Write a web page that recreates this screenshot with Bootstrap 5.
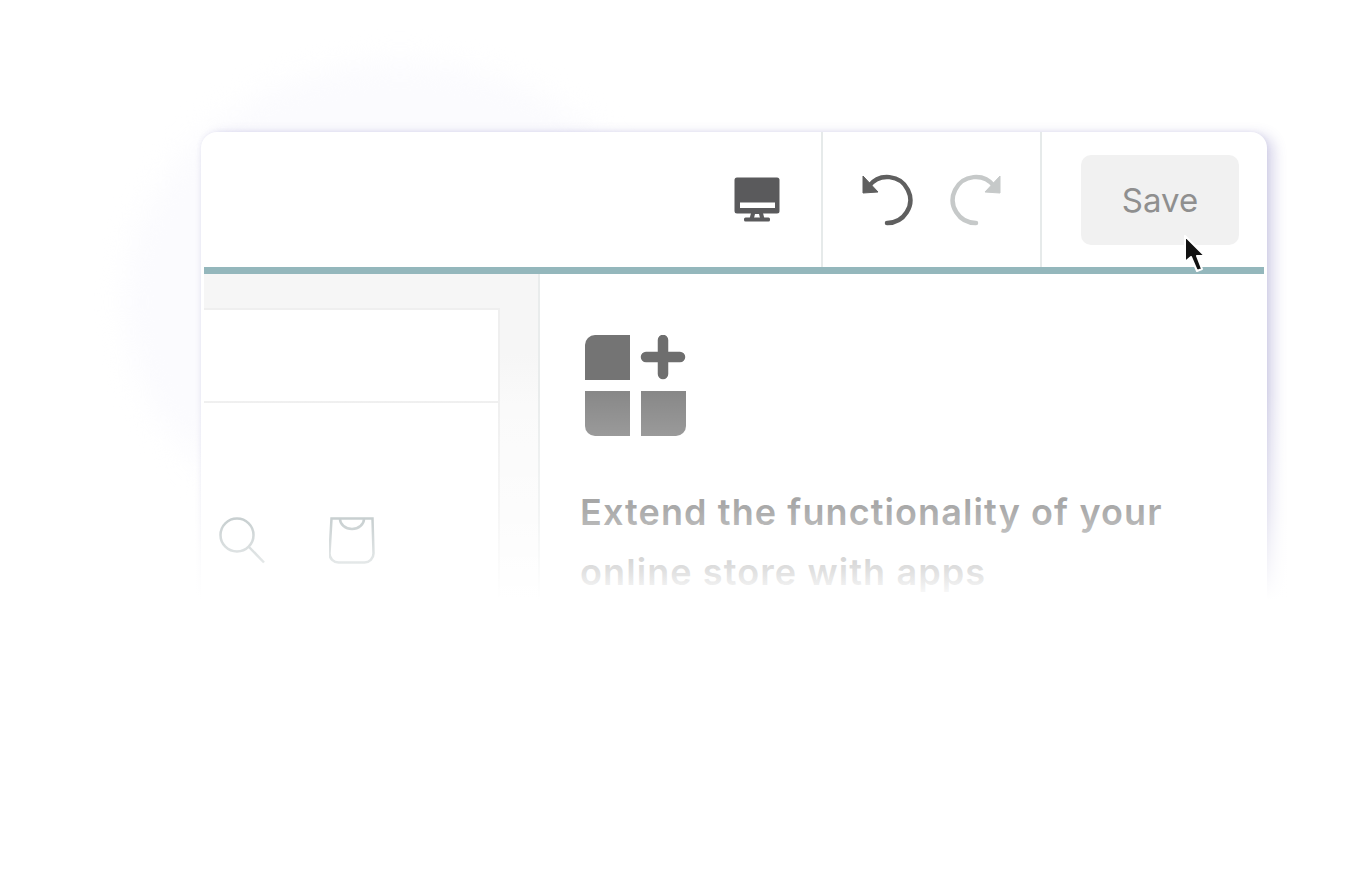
<!DOCTYPE html>
<html lang="en">
<head>
<meta charset="utf-8">
<title>Editor</title>
<link href="https://cdn.jsdelivr.net/npm/bootstrap@5.3.0/dist/css/bootstrap.min.css" rel="stylesheet">
<style>
html,body{height:100%;background:#fff}
body{font-family:Inter,"Liberation Sans",sans-serif;overflow:hidden}
.stage{position:relative;height:891px;padding:132px 100px 0 201px;overflow:hidden}
.glow{position:absolute;left:125px;top:62px;width:550px;height:480px;border-radius:50%;background:#fbfbfe;filter:blur(14px)}
.win{position:relative;width:1066px;height:560px;background:#fff;border-radius:16px;padding:0 3px;box-shadow:7px 3px 13px rgba(92,84,170,.24),0 0 5px rgba(92,84,170,.1)}
.bar{height:135px}
.seg-a{width:617px;padding-right:41px}
.seg-b{width:219px;border-left:2px solid #e6eaea;padding-left:38px;gap:37px}
.seg-c{flex:1;border-left:2px solid #e6eaea;padding-left:39px;padding-top:23px}
.savebtn{width:158px;height:90px;background:#f1f1f1;border:0;border-radius:10px;color:#8f8f8f;font-size:33px;line-height:88px;padding:0;--bs-btn-hover-bg:#f1f1f1}
.rule{height:7px;background:#94b7bc}
.pane{height:418px}
.leftp{width:336px;background:linear-gradient(to bottom,#f6f6f6 80px,#fafafa 130px);border-right:2px solid #e9ecec;padding:34px 38px 0 0}
.sheet{background:#fff;border:solid #efefef;border-width:2px 2px 0 0;height:100%}
.sheet-h{height:93px;border-bottom:2px solid #efefef}
.sheet-b{padding:114px 0 0 15px;gap:64px}
.rightp{padding:61px 0 0 40px}
.gfx{display:block;margin-left:5px;margin-bottom:45px}
.pitch{font-size:36px;font-weight:600;letter-spacing:1.1px;line-height:60px;color:#707070;margin:0;white-space:nowrap}
.veil{position:absolute;left:0;right:0;top:300px;height:591px;pointer-events:none;background:linear-gradient(to bottom,rgba(255,255,255,0) 90px,rgba(255,255,255,.42) 211px,rgba(255,255,255,.79) 271px,#fff 300px)}
.ptr{position:absolute;left:1183px;top:234px}
</style>
</head>
<body>
<div class="stage">
  <div class="glow"></div>
  <div class="win">
    <div class="bar d-flex">
      <div class="seg-a d-flex justify-content-end align-items-center">
        <svg width="46" height="46" viewBox="0 0 46 46"><rect x="0.5" y="0.5" width="45" height="36" rx="2.5" fill="#5a5a5c"/><rect x="6" y="25.500" width="35" height="5.500" fill="#fff"/><path d="M17 36h12l1.500 6h-15z" fill="#5a5a5c"/><path d="M21 37h4l1 4h-6z" fill="#fff"/><rect x="10" y="40.500" width="26" height="4" rx="1.500" fill="#5a5a5c"/></svg>
      </div>
      <div class="seg-b d-flex align-items-center">
        <svg width="52" height="54" viewBox="0 0 52 54" fill="none"><path d="M26 50a23 23 0 1 0-18-37" stroke="#5f5f5f" stroke-width="4.500" stroke-linecap="round"/><path d="M2 3v17l15-1z" fill="#5f5f5f" stroke="#5f5f5f" stroke-linejoin="round"/></svg>
        <svg width="52" height="54" viewBox="0 0 52 54" fill="none"><path d="M26 50a23 23 0 1 1 18-37" stroke="#c6c9c9" stroke-width="4.500" stroke-linecap="round"/><path d="M50 3v17l-15-1z" fill="#c6c9c9" stroke="#c6c9c9" stroke-linejoin="round"/></svg>
      </div>
      <div class="seg-c"><button type="button" class="btn savebtn">Save</button></div>
    </div>
    <div class="rule"></div>
    <div class="pane d-flex">
      <div class="leftp">
        <div class="sheet">
          <div class="sheet-h"></div>
          <div class="sheet-b d-flex">
            <svg width="46" height="47" viewBox="0 0 46 47" fill="none" stroke="#98a6a8" stroke-width="2.500"><circle cx="18" cy="18" r="16.500"/><path d="M30 30l15 15.500"/></svg>
            <svg width="46" height="47" viewBox="0 0 46 47" fill="none" stroke="#98a6a8" stroke-width="2.500"><path d="M2.500 1.500h41l1 35a9 9 0 0 1-9 9h-26a9 9 0 0 1-9-9z"/><path d="M11 2a12 10 0 0 0 24 0"/></svg>
          </div>
        </div>
      </div>
      <div class="rightp flex-grow-1">
        <svg class="gfx" width="101" height="102" viewBox="0 0 101 102"><path d="M0 45V10A10 10 0 0 1 10 0h35v45z" fill="#747474"/><path d="M0 56h45v45H10A10 10 0 0 1 0 91z" fill="#878787"/><path d="M56 56h45v35a10 10 0 0 1-10 10H56z" fill="#878787"/><path d="M78 5v34M61 22h34" stroke="#6e6e6e" stroke-width="10.500" stroke-linecap="round"/></svg>
        <p class="pitch">Extend the functionality of your<br>online store with apps</p>
      </div>
    </div>
  </div>
  <div class="veil"></div>
  <svg class="ptr" width="27" height="41" viewBox="0 0 27 41"><path d="M2 2v26l6-5 6 14 5-2-5-13h8z" fill="#111" stroke="#fff" stroke-width="2" stroke-linejoin="round"/></svg>
</div>
<script src="https://cdn.jsdelivr.net/npm/bootstrap@5.3.0/dist/js/bootstrap.bundle.min.js"></script>
</body>
</html>
